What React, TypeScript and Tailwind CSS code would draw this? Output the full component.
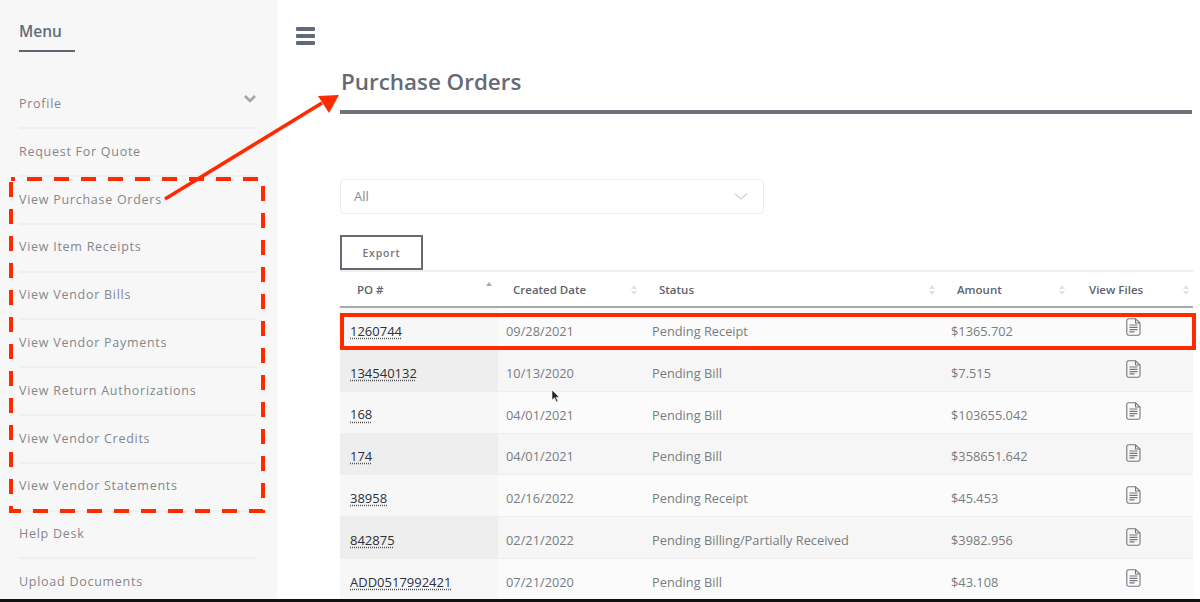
const menuItems = [
  "Profile",
  "Request For Quote",
  "View Purchase Orders",
  "View Item Receipts",
  "View Vendor Bills",
  "View Vendor Payments",
  "View Return Authorizations",
  "View Vendor Credits",
  "View Vendor Statements",
  "Help Desk",
  "Upload Documents",
];

const orders = [
  { po: "1260744", date: "09/28/2021", status: "Pending Receipt", amount: "$1365.702" },
  { po: "134540132", date: "10/13/2020", status: "Pending Bill", amount: "$7.515" },
  { po: "168", date: "04/01/2021", status: "Pending Bill", amount: "$103655.042" },
  { po: "174", date: "04/01/2021", status: "Pending Bill", amount: "$358651.642" },
  { po: "38958", date: "02/16/2022", status: "Pending Receipt", amount: "$45.453" },
  { po: "842875", date: "02/21/2022", status: "Pending Billing/Partially Received", amount: "$3982.956" },
  { po: "ADD0517992421", date: "07/21/2020", status: "Pending Bill", amount: "$43.108" },
];

function SortIcon({ active }: { active?: boolean }) {
  return (
    <svg width="8" height="12" viewBox="0 0 8 12" className="shrink-0">
      <path d="M4 1 L7 5 H1 Z" fill={active ? "#a9abb0" : "#e0e1e3"} />
      {!active && <path d="M4 11 L7 7 H1 Z" fill="#e0e1e3" />}
    </svg>
  );
}

function FileIcon() {
  return (
    <svg width="15" height="18" viewBox="0 0 15 18" fill="none" stroke="#74777d" strokeWidth="1.1">
      <path d="M2.5 .8 H9.5 L14 5 V15.5 A1.7 1.7 0 0 1 12.3 17.2 H2.5 A1.7 1.7 0 0 1 .8 15.5 V2.5 A1.7 1.7 0 0 1 2.5 .8 Z" />
      <path d="M9.5 .8 V5 H14" />
      <path d="M3.5 7 H11.5 M3.5 9.3 H11.5 M3.5 11.6 H11.5 M3.5 13.9 H8.5" strokeWidth="1.2" />
    </svg>
  );
}

function Sidebar() {
  return (
    <aside className="w-[277px] h-full shrink-0 bg-[#f7f7f7] pl-[19px] pr-[20px] pt-[20px] overflow-hidden">
      <div className="w-[56px] h-[32px] border-b-2 border-[#5f6672] text-[15.5px] leading-[22px] font-semibold text-[#666c77]">
        Menu
      </div>
      <ul className="mt-[29.5px]">
        {menuItems.map((item, i) => (
          <li
            key={item}
            className="relative flex items-center h-[47.8px] text-[12.5px] tracking-[0.73px] text-[#84878c] border-b-2 border-[#efefef]"
          >
            {item}
            {i === 0 && (
              <svg width="14" height="10" viewBox="0 0 14 10" fill="none" className="absolute right-0 top-[12px]">
                <path d="M2 2 L7 7 L12 2" stroke="#a2a5a9" strokeWidth="2.6" />
              </svg>
            )}
          </li>
        ))}
      </ul>
    </aside>
  );
}

function OrdersTable() {
  return (
    <div className="w-[853px]">
      <div className="flex h-[38px] pt-[1px] border-t-2 border-b-2 border-t-[#efefef] border-b-[#a9abaf] text-[11.5px] font-semibold text-[#5f636b]">
        <div className="w-[158px] pl-[17px] pr-[5px] flex justify-between pt-[8px]"><span>PO #</span><SortIcon active /></div>
        <div className="w-[146px] pl-[15px] pr-[6px] flex justify-between items-center"><span>Created Date</span><SortIcon /></div>
        <div className="w-[298px] pl-[15px] pr-[6px] flex justify-between items-center"><span>Status</span><SortIcon /></div>
        <div className="w-[138px] pl-[15px] pr-[14px] flex justify-between items-center"><span>Amount</span><SortIcon /></div>
        <div className="w-[113px] pl-[9px] pr-[3px] flex justify-between items-center"><span>View Files</span><SortIcon /></div>
      </div>
      {orders.map((o, i) => (
        <div
          key={o.po}
          className={`flex h-[41.85px] items-center text-[12.8px] text-[#797c81] border-b border-[#eeeeee] ${
            i % 2 === 0 ? "bg-[#fbfbfb]" : "bg-[#f6f6f6]"
          }`}
        >
          <div className={`w-[158px] h-full flex items-center pl-[10px] pt-[6px] ${i % 2 === 0 ? "bg-[#f7f7f7]" : "bg-[#eeeeee]"}`}>
            <span className="text-[13px] text-[#2c3038] underline decoration-dotted decoration-[#555] underline-offset-2">{o.po}</span>
          </div>
          <div className="w-[146px] pl-[8px] pt-[6px]">{o.date}</div>
          <div className="w-[299px] pl-[8px] pt-[6px]">{o.status}</div>
          <div className="w-[137px] pl-[8px] pt-[6px]">{o.amount}</div>
          <div className="w-[113px] flex justify-center pr-[7px] pb-[2px]">
            <FileIcon />
          </div>
        </div>
      ))}
    </div>
  );
}

function Annotations() {
  return (
    <>
      <svg width="1200" height="602" viewBox="0 0 1200 602" className="absolute left-0 top-0 pointer-events-none" fill="none">
        <path
          d="M11 179 H263 V511 H11 Z"
          stroke="#ff2a00"
          strokeWidth="4"
          strokeDasharray="15 12"
          strokeDashoffset="-16"
        />
        <path d="M165 199 L322 103" stroke="#ff2a00" strokeWidth="3.5" />
        <path d="M339 95 L318 96 L329 113 Z" fill="#ff2a00" />
      </svg>
      <div className="absolute left-[340px] top-[313px] w-[856px] h-[37px] border-4 border-[#ff2a00]" />
      <svg width="10" height="15" viewBox="0 0 10 15" className="absolute left-[551px] top-[389px]">
        <path d="M1 1 V11 L3.5 8.8 L5.5 13 L7 12.3 L5 8.2 H8.3 Z" fill="#222" stroke="#fff" strokeWidth=".6" />
      </svg>
    </>
  );
}

export default function App() {
  return (
    <div className="relative w-[1200px] h-[602px] overflow-hidden bg-white font-['Open_Sans',sans-serif]">
      <div className="flex h-[599px] overflow-hidden">
        <Sidebar />
        <main className="flex-1 pl-[19px] pt-[27px]">
          <div className="flex flex-col gap-[3px] w-[19px]">
            <span className="h-[4px] bg-[#646a75] rounded-[1px]" />
            <span className="h-[4px] bg-[#646a75] rounded-[1px]" />
            <span className="h-[4px] bg-[#646a75] rounded-[1px]" />
          </div>
          <div className="ml-[44px]">
            <h1 className="mt-[22px] ml-px text-[22.4px] leading-[30px] font-semibold text-[#656a75]">Purchase Orders</h1>
            <div className="mt-[13px] w-[852px] h-[4px] bg-[#6c717b]" />
            <div className="mt-[65px] w-[424px] h-[35px] flex items-center justify-between pl-[13px] pr-[14px] border border-[#eeeeee] rounded-[4px] text-[13px] text-[#86898e]">
              All
              <svg width="16" height="9" viewBox="0 0 16 9" fill="none">
                <path d="M2 1.5 L8 7 L14 1.5" stroke="#d6d7d9" strokeWidth="1.6" />
              </svg>
            </div>
            <button className="mt-[21px] block w-[83px] h-[35px] pt-[2px] border-2 border-[#666a72] bg-white text-[10.5px] font-semibold tracking-[0.8px] text-[#74777d]">
              Export
            </button>
            <OrdersTable />
          </div>
        </main>
      </div>
      <div className="h-[3px] bg-[#111111]" />
      <Annotations />
    </div>
  );
}
